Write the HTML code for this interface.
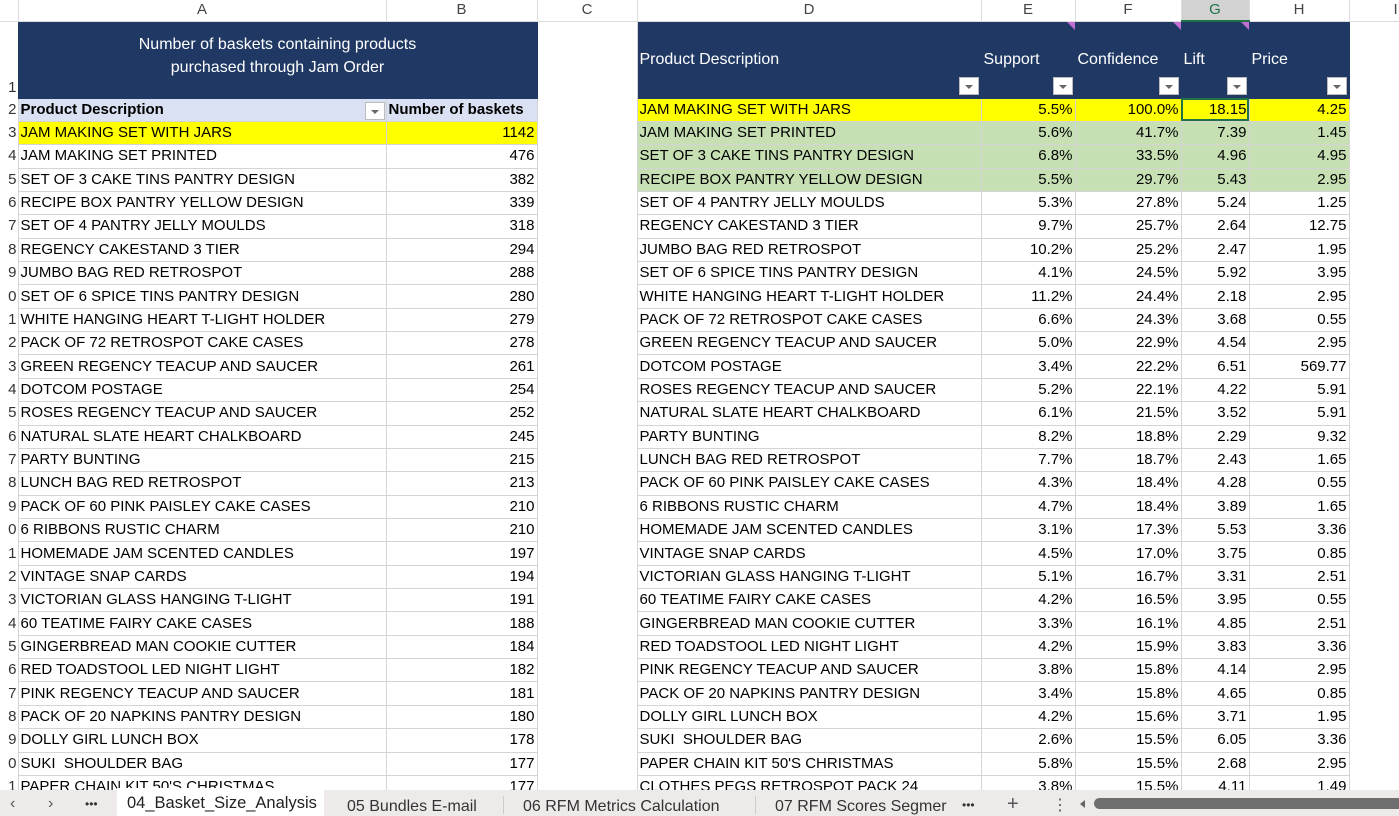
<!DOCTYPE html>
<html><head><meta charset="utf-8"><style>
*{margin:0;padding:0;box-sizing:border-box}
body{width:1399px;height:816px;overflow:hidden;background:#fff;font-family:"Liberation Sans",sans-serif;font-size:15px;color:#000;position:relative}
table{border-collapse:collapse;table-layout:fixed;position:absolute;left:0;top:0;width:1409px}
td{height:23.37px;padding:0 2px;white-space:nowrap;overflow:hidden;border:1px solid #d4d4d4;line-height:20px}
tr.ch td{height:20px;background:#fff;color:#444;text-align:center;font-size:15px;border:1px solid #dcdcdc;border-top:none}
td.rn{border:none;text-align:right;padding:0 1px 0 0;color:#333;font-size:15px;overflow:hidden}
td.c{border-top:none;border-bottom:none;border-left:1px solid #d4d4d4;border-right:1px solid #d4d4d4}
td.r{text-align:right}
td.nv{background:#203864;color:#fff;border-color:#203864;position:relative;font-size:16px}
.y td.d{background:#ffff00}
.g td.d{background:#c6e0b4}
.yl{background:#ffff00}
.fb{position:absolute;right:2px;bottom:3px;width:20px;height:18px;background:#fff;border:1px solid #bbb}
.fb:after{content:"";position:absolute;left:5px;top:7px;border-left:4px solid transparent;border-right:4px solid transparent;border-top:4px solid #666}
.cm{position:absolute;right:0;top:0;width:0;height:0;border-left:8px solid transparent;border-top:8px solid #c26fd3}
.hd{background:#d9e1f2;font-weight:bold;position:relative}
.tabs{position:absolute;left:0;top:790px;width:1399px;height:26px;background:#efeaea;font-size:16px;color:#333}
.tabs span{position:absolute;top:5px}
</style></head><body>
<table>
<colgroup><col style="width:18px"><col style="width:368px"><col style="width:151px"><col style="width:100px"><col style="width:344px"><col style="width:94px"><col style="width:106px"><col style="width:68px"><col style="width:100px"><col style="width:60px"></colgroup>
<tr class="ch"><td style="border-left:none"></td><td>A</td><td>B</td><td>C</td><td>D</td><td>E</td><td>F</td><td style="background:#d2d2d2;color:#217346;border-bottom:2px solid #217346">G</td><td>H</td><td style="text-align:left;padding-left:44px">I</td></tr>
<tr style="height:77px"><td class="rn" style="vertical-align:bottom">1</td><td colspan="2" class="nv" style="text-align:center;line-height:23px;padding:0 0 8px 0">Number of baskets containing products<br>purchased through Jam Order</td><td class="c"></td><td class="nv">Product Description<div class="fb"></div></td><td class="nv">Support<div class="fb"></div><div class="cm"></div></td><td class="nv">Confidence<div class="fb"></div><div class="cm"></div></td><td class="nv">Lift<div class="fb"></div><div class="cm"></div></td><td class="nv">Price<div class="fb"></div></td><td style="border:none"></td></tr>
<tr class="y"><td class="rn">2</td><td class="hd">Product Description<div class="fb" style="bottom:1px;right:1px"></div></td><td class="hd">Number of baskets</td><td class="c"></td><td class="d">JAM MAKING SET WITH JARS</td><td class="d r">5.5%</td><td class="d r">100.0%</td><td class="d r" style="outline:2px solid #217346;outline-offset:-2px">18.15</td><td class="d r">4.25</td><td style="border:none"></td></tr>
<tr class="g"><td class="rn">3</td><td class="yl">JAM MAKING SET WITH JARS</td><td class="yl r">1142</td><td class="c"></td><td class="d">JAM MAKING SET PRINTED</td><td class="d r">5.6%</td><td class="d r">41.7%</td><td class="d r">7.39</td><td class="d r">1.45</td><td style="border:none"></td></tr>
<tr class="g"><td class="rn">4</td><td>JAM MAKING SET PRINTED</td><td class="r">476</td><td class="c"></td><td class="d">SET OF 3 CAKE TINS PANTRY DESIGN</td><td class="d r">6.8%</td><td class="d r">33.5%</td><td class="d r">4.96</td><td class="d r">4.95</td><td style="border:none"></td></tr>
<tr class="g"><td class="rn">5</td><td>SET OF 3 CAKE TINS PANTRY DESIGN</td><td class="r">382</td><td class="c"></td><td class="d">RECIPE BOX PANTRY YELLOW DESIGN</td><td class="d r">5.5%</td><td class="d r">29.7%</td><td class="d r">5.43</td><td class="d r">2.95</td><td style="border:none"></td></tr>
<tr><td class="rn">6</td><td>RECIPE BOX PANTRY YELLOW DESIGN</td><td class="r">339</td><td class="c"></td><td>SET OF 4 PANTRY JELLY MOULDS</td><td class="r">5.3%</td><td class="r">27.8%</td><td class="r">5.24</td><td class="r">1.25</td><td style="border:none"></td></tr>
<tr><td class="rn">7</td><td>SET OF 4 PANTRY JELLY MOULDS</td><td class="r">318</td><td class="c"></td><td>REGENCY CAKESTAND 3 TIER</td><td class="r">9.7%</td><td class="r">25.7%</td><td class="r">2.64</td><td class="r">12.75</td><td style="border:none"></td></tr>
<tr><td class="rn">8</td><td>REGENCY CAKESTAND 3 TIER</td><td class="r">294</td><td class="c"></td><td>JUMBO BAG RED RETROSPOT</td><td class="r">10.2%</td><td class="r">25.2%</td><td class="r">2.47</td><td class="r">1.95</td><td style="border:none"></td></tr>
<tr><td class="rn">9</td><td>JUMBO BAG RED RETROSPOT</td><td class="r">288</td><td class="c"></td><td>SET OF 6 SPICE TINS PANTRY DESIGN</td><td class="r">4.1%</td><td class="r">24.5%</td><td class="r">5.92</td><td class="r">3.95</td><td style="border:none"></td></tr>
<tr><td class="rn">0</td><td>SET OF 6 SPICE TINS PANTRY DESIGN</td><td class="r">280</td><td class="c"></td><td>WHITE HANGING HEART T-LIGHT HOLDER</td><td class="r">11.2%</td><td class="r">24.4%</td><td class="r">2.18</td><td class="r">2.95</td><td style="border:none"></td></tr>
<tr><td class="rn">1</td><td>WHITE HANGING HEART T-LIGHT HOLDER</td><td class="r">279</td><td class="c"></td><td>PACK OF 72 RETROSPOT CAKE CASES</td><td class="r">6.6%</td><td class="r">24.3%</td><td class="r">3.68</td><td class="r">0.55</td><td style="border:none"></td></tr>
<tr><td class="rn">2</td><td>PACK OF 72 RETROSPOT CAKE CASES</td><td class="r">278</td><td class="c"></td><td>GREEN REGENCY TEACUP AND SAUCER</td><td class="r">5.0%</td><td class="r">22.9%</td><td class="r">4.54</td><td class="r">2.95</td><td style="border:none"></td></tr>
<tr><td class="rn">3</td><td>GREEN REGENCY TEACUP AND SAUCER</td><td class="r">261</td><td class="c"></td><td>DOTCOM POSTAGE</td><td class="r">3.4%</td><td class="r">22.2%</td><td class="r">6.51</td><td class="r">569.77</td><td style="border:none"></td></tr>
<tr><td class="rn">4</td><td>DOTCOM POSTAGE</td><td class="r">254</td><td class="c"></td><td>ROSES REGENCY TEACUP AND SAUCER</td><td class="r">5.2%</td><td class="r">22.1%</td><td class="r">4.22</td><td class="r">5.91</td><td style="border:none"></td></tr>
<tr><td class="rn">5</td><td>ROSES REGENCY TEACUP AND SAUCER</td><td class="r">252</td><td class="c"></td><td>NATURAL SLATE HEART CHALKBOARD</td><td class="r">6.1%</td><td class="r">21.5%</td><td class="r">3.52</td><td class="r">5.91</td><td style="border:none"></td></tr>
<tr><td class="rn">6</td><td>NATURAL SLATE HEART CHALKBOARD</td><td class="r">245</td><td class="c"></td><td>PARTY BUNTING</td><td class="r">8.2%</td><td class="r">18.8%</td><td class="r">2.29</td><td class="r">9.32</td><td style="border:none"></td></tr>
<tr><td class="rn">7</td><td>PARTY BUNTING</td><td class="r">215</td><td class="c"></td><td>LUNCH BAG RED RETROSPOT</td><td class="r">7.7%</td><td class="r">18.7%</td><td class="r">2.43</td><td class="r">1.65</td><td style="border:none"></td></tr>
<tr><td class="rn">8</td><td>LUNCH BAG RED RETROSPOT</td><td class="r">213</td><td class="c"></td><td>PACK OF 60 PINK PAISLEY CAKE CASES</td><td class="r">4.3%</td><td class="r">18.4%</td><td class="r">4.28</td><td class="r">0.55</td><td style="border:none"></td></tr>
<tr><td class="rn">9</td><td>PACK OF 60 PINK PAISLEY CAKE CASES</td><td class="r">210</td><td class="c"></td><td>6 RIBBONS RUSTIC CHARM</td><td class="r">4.7%</td><td class="r">18.4%</td><td class="r">3.89</td><td class="r">1.65</td><td style="border:none"></td></tr>
<tr><td class="rn">0</td><td>6 RIBBONS RUSTIC CHARM</td><td class="r">210</td><td class="c"></td><td>HOMEMADE JAM SCENTED CANDLES</td><td class="r">3.1%</td><td class="r">17.3%</td><td class="r">5.53</td><td class="r">3.36</td><td style="border:none"></td></tr>
<tr><td class="rn">1</td><td>HOMEMADE JAM SCENTED CANDLES</td><td class="r">197</td><td class="c"></td><td>VINTAGE SNAP CARDS</td><td class="r">4.5%</td><td class="r">17.0%</td><td class="r">3.75</td><td class="r">0.85</td><td style="border:none"></td></tr>
<tr><td class="rn">2</td><td>VINTAGE SNAP CARDS</td><td class="r">194</td><td class="c"></td><td>VICTORIAN GLASS HANGING T-LIGHT</td><td class="r">5.1%</td><td class="r">16.7%</td><td class="r">3.31</td><td class="r">2.51</td><td style="border:none"></td></tr>
<tr><td class="rn">3</td><td>VICTORIAN GLASS HANGING T-LIGHT</td><td class="r">191</td><td class="c"></td><td>60 TEATIME FAIRY CAKE CASES</td><td class="r">4.2%</td><td class="r">16.5%</td><td class="r">3.95</td><td class="r">0.55</td><td style="border:none"></td></tr>
<tr><td class="rn">4</td><td>60 TEATIME FAIRY CAKE CASES</td><td class="r">188</td><td class="c"></td><td>GINGERBREAD MAN COOKIE CUTTER</td><td class="r">3.3%</td><td class="r">16.1%</td><td class="r">4.85</td><td class="r">2.51</td><td style="border:none"></td></tr>
<tr><td class="rn">5</td><td>GINGERBREAD MAN COOKIE CUTTER</td><td class="r">184</td><td class="c"></td><td>RED TOADSTOOL LED NIGHT LIGHT</td><td class="r">4.2%</td><td class="r">15.9%</td><td class="r">3.83</td><td class="r">3.36</td><td style="border:none"></td></tr>
<tr><td class="rn">6</td><td>RED TOADSTOOL LED NIGHT LIGHT</td><td class="r">182</td><td class="c"></td><td>PINK REGENCY TEACUP AND SAUCER</td><td class="r">3.8%</td><td class="r">15.8%</td><td class="r">4.14</td><td class="r">2.95</td><td style="border:none"></td></tr>
<tr><td class="rn">7</td><td>PINK REGENCY TEACUP AND SAUCER</td><td class="r">181</td><td class="c"></td><td>PACK OF 20 NAPKINS PANTRY DESIGN</td><td class="r">3.4%</td><td class="r">15.8%</td><td class="r">4.65</td><td class="r">0.85</td><td style="border:none"></td></tr>
<tr><td class="rn">8</td><td>PACK OF 20 NAPKINS PANTRY DESIGN</td><td class="r">180</td><td class="c"></td><td>DOLLY GIRL LUNCH BOX</td><td class="r">4.2%</td><td class="r">15.6%</td><td class="r">3.71</td><td class="r">1.95</td><td style="border:none"></td></tr>
<tr><td class="rn">9</td><td>DOLLY GIRL LUNCH BOX</td><td class="r">178</td><td class="c"></td><td>SUKI&nbsp; SHOULDER BAG</td><td class="r">2.6%</td><td class="r">15.5%</td><td class="r">6.05</td><td class="r">3.36</td><td style="border:none"></td></tr>
<tr><td class="rn">0</td><td>SUKI&nbsp; SHOULDER BAG</td><td class="r">177</td><td class="c"></td><td>PAPER CHAIN KIT 50'S CHRISTMAS</td><td class="r">5.8%</td><td class="r">15.5%</td><td class="r">2.68</td><td class="r">2.95</td><td style="border:none"></td></tr>
<tr><td class="rn">1</td><td>PAPER CHAIN KIT 50'S CHRISTMAS</td><td class="r">177</td><td class="c"></td><td>CLOTHES PEGS RETROSPOT PACK 24</td><td class="r">3.8%</td><td class="r">15.5%</td><td class="r">4.11</td><td class="r">1.49</td><td style="border:none"></td></tr>
</table>
<div class="tabs">
<span style="left:10px;color:#555">&#8249;</span>
<span style="left:48px;color:#555">&#8250;</span>
<span style="left:85px;font-size:12px;top:7px">•••</span>
<div style="position:absolute;left:117px;top:-2px;width:207px;height:28px;background:#fff"></div>
<span style="left:127px;top:4px;color:#222;font-size:16.5px">04_Basket_Size_Analysis</span>
<span style="left:347px;top:8px">05 Bundles E-mail</span>
<div style="position:absolute;left:503px;top:6px;width:1px;height:18px;background:#ccc"></div>
<span style="left:523px;top:8px">06 RFM Metrics Calculation</span>
<div style="position:absolute;left:755px;top:6px;width:1px;height:18px;background:#ccc"></div>
<span style="left:775px;top:8px">07 RFM Scores Segmer</span>
<span style="left:962px;font-size:12px;top:8px">•••</span>
<span style="left:1007px;top:3px;font-size:20px;color:#555">+</span>
<span style="left:1052px;top:5px;color:#555">&#8942;</span>
<div style="position:absolute;left:1080px;top:10px;width:0;height:0;border-top:4px solid transparent;border-bottom:4px solid transparent;border-right:5px solid #666"></div>
<div style="position:absolute;left:1094px;top:8px;width:310px;height:11px;border-radius:6px;background:#6e6e6e"></div>
</div>
</body></html>
